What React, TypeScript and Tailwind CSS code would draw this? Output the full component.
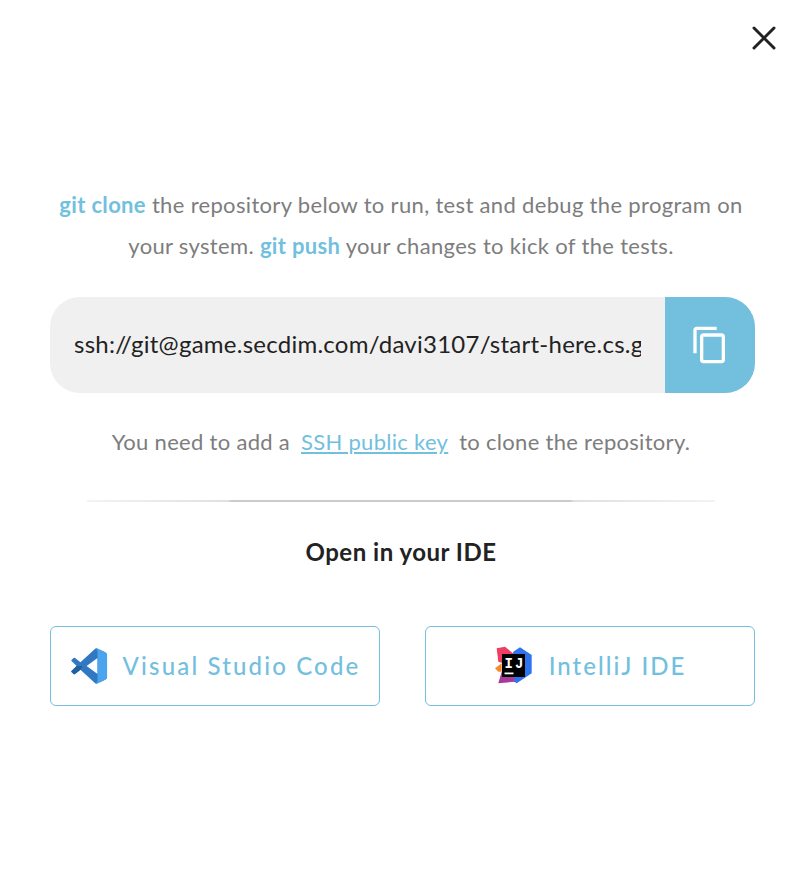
import React from "react";

function CopyIcon() {
  return (
    <svg width="40" height="40" viewBox="0 0 24 24" fill="white">
      <path d="M16 1H4c-1.1 0-2 .9-2 2v14h2V3h12V1zm3 4H8c-1.1 0-2 .9-2 2v14c0 1.1.9 2 2 2h11c1.1 0 2-.9 2-2V7c0-1.1-.9-2-2-2zm0 16H8V7h11v14z" />
    </svg>
  );
}

function VSCodeIcon() {
  return (
    <svg width="38" height="38" viewBox="0 0 40 40">
      <path d="M28.6 1.5 L37 5.4 Q39 6.4 39 8.5 L39 31.5 Q39 33.6 37 34.6 L28.6 38.5 Q27.4 39 26.2 38 L11 24 L5 28.6 Q4.4 29 3.8 28.5 L1.6 26.4 Q1 25.8 1.6 25.2 L7 20 L1.6 14.8 Q1 14.2 1.6 13.6 L3.8 11.5 Q4.4 11 5 11.4 L11 16 L26.2 2 Q27.4 1 28.6 1.5 Z M29 11.5 L17.5 20 L29 28.5 Z" fill="#3079c2" fillRule="evenodd" />
      <path d="M28.6 1.5 L37 5.4 Q39 6.4 39 8.5 L39 31.5 Q39 33.6 37 34.6 L28.6 38.5 Q28 38.8 27 38.5 Q29 37.6 29 35 L29 5 Q29 2.4 27 1.5 Q28 1.2 28.6 1.5 Z" fill="#4ba4ee" />
      <path d="M7 20 L1.6 25.2 Q1 25.8 1.6 26.4 L3.8 28.5 Q4.4 29 5 28.6 L11 24 L13 20 Z" fill="#20619f" />
    </svg>
  );
}

function IntelliJIcon() {
  return (
    <svg width="40" height="40" viewBox="0 0 40 40">
      <polygon points="26,1.3 37.7,9 37.7,27.3 22.7,37.3 12.7,30.7 19.3,5.7" fill="#2f73ee" />
      <polygon points="2.7,2.3 11,0.7 21,9 9.3,17.3 4.3,15.7" fill="#ef3e62" />
      <polygon points="1,22.3 7.7,17.3 7.7,25.7 4.3,25.7" fill="#f58a2b" />
      <polygon points="7.7,25.7 19.3,30.7 21,35.7 4.3,37.3" fill="#a83a9c" />
      <rect x="8" y="8" width="23" height="23" fill="#000" />
      <rect x="10.5" y="26.5" width="9" height="1.8" fill="#fff" />
      <text x="10.5" y="21.5" fill="#fff" fontFamily="Liberation Mono, monospace" fontWeight="700" fontSize="14">IJ</text>
    </svg>
  );
}

export default function App() {
  return (
    <div className="relative w-[802px] h-[890px] bg-white font-['Lato',sans-serif] px-[50px] pt-[184px]">
      <button className="absolute top-[26px] right-[26px] text-[#222]">
        <svg width="24" height="24" viewBox="0 0 24 24" fill="none" stroke="currentColor" strokeWidth="3" strokeLinecap="round">
          <path d="M2 2 L22 22 M22 2 L2 22" />
        </svg>
      </button>

      <p className="whitespace-nowrap text-center text-[22px] leading-[41px] tracking-[0.33px] text-[#7d7d7d]">
        <b className="font-bold text-[#72bfde]">git clone</b> the repository below to run, test and debug the program on
        <br />
        your system. <b className="font-bold text-[#72bfde]">git push</b> your changes to kick of the tests.
      </p>

      <div className="mt-[31px] flex h-24 w-[705px] overflow-hidden rounded-[30px] bg-[#f0f0f0]">
        <div className="flex-1 min-w-0 px-6 flex items-center">
          <span className="block -translate-y-px overflow-hidden whitespace-nowrap text-[24px] tracking-[0.25px] text-[#222]">
            ssh://git@game.secdim.com/davi3107/start-here.cs.git
          </span>
        </div>
        <div className="flex w-[90px] items-center justify-center bg-[#72bfde]">
          <CopyIcon />
        </div>
      </div>

      <p className="mt-[34px] whitespace-nowrap text-center text-[22px] leading-[30px] tracking-[0.3px] text-[#7d7d7d]">
        You need to add a <a className="mx-[5px] text-[#72bfde] underline">SSH public key</a> to clone the repository.
      </p>

      <div className="mt-[43px] mx-[37px] h-[2px] bg-[linear-gradient(90deg,#f3f3f3_0%,#e0e0e0_22.5%,#cccaca_23%,#cccaca_77%,#e0e0e0_77.5%,#f3f3f3_100%)]" />

      <h2 className="mt-[33px] text-center text-[24px] leading-[34px] font-bold tracking-[0.5px] text-[#222]">Open in your IDE</h2>

      <div className="mt-[57px] flex w-[705px] justify-between">
        <button className="flex h-20 w-[330px] items-center justify-center gap-[15px] rounded-md border border-[#72bfde] text-[24px] font-medium tracking-[2.15px] text-[#72bfde]">
          <VSCodeIcon />
          Visual Studio Code
        </button>
        <button className="flex h-20 w-[330px] items-center justify-center gap-[15px] rounded-md border border-[#72bfde] text-[24px] font-medium tracking-[2px] text-[#72bfde]">
          <IntelliJIcon />
          IntelliJ IDE
        </button>
      </div>
    </div>
  );
}
